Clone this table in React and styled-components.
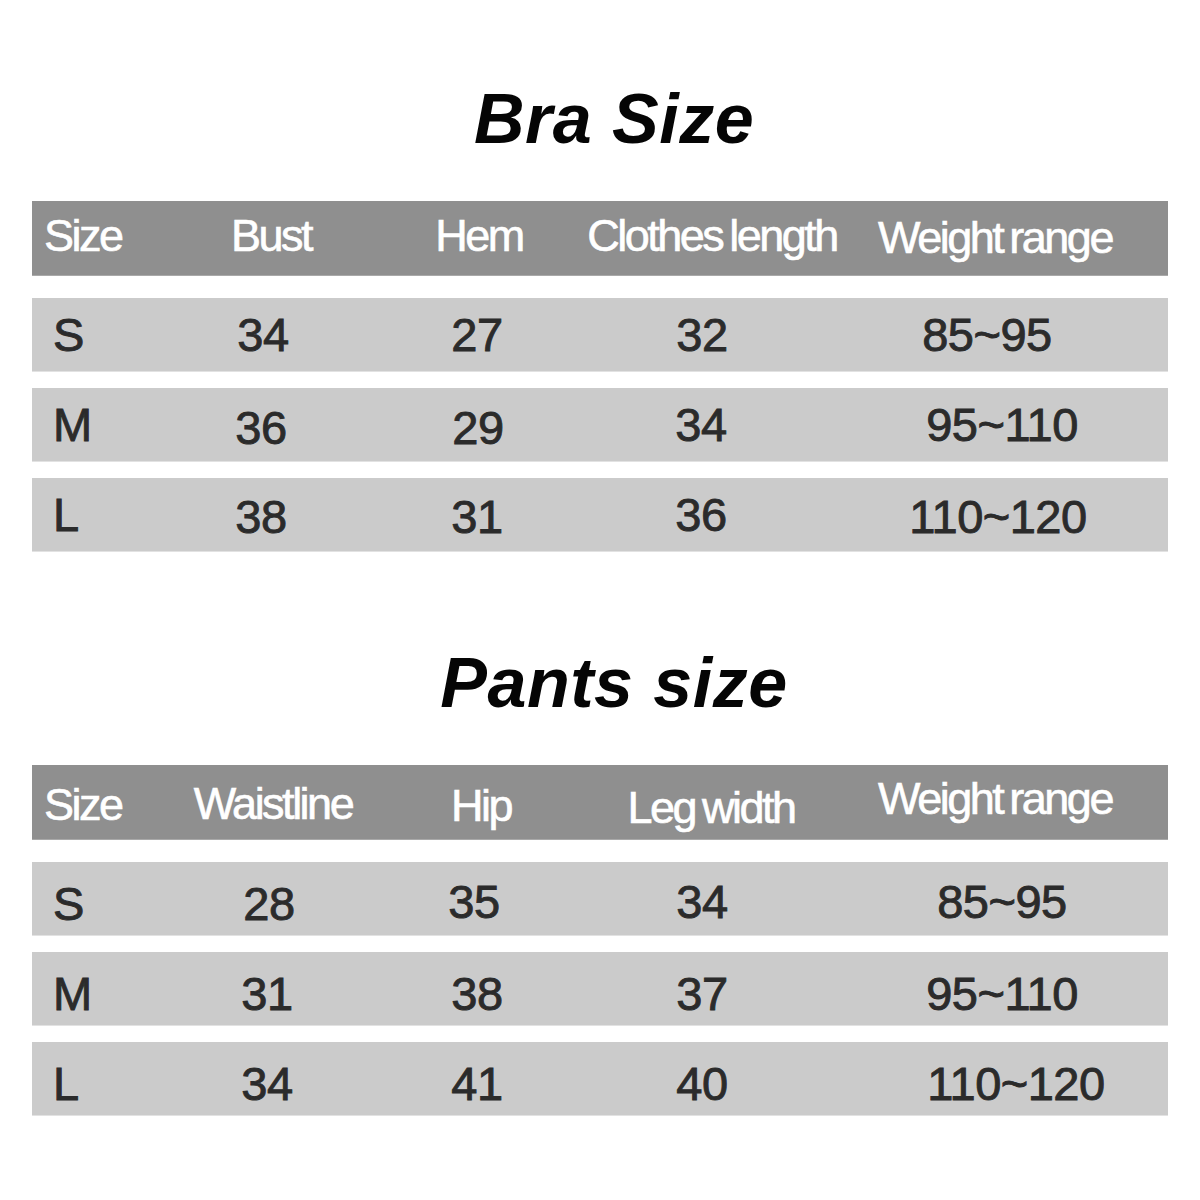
import React from 'react';
import styled, { createGlobalStyle } from 'styled-components';

const GlobalStyle = createGlobalStyle`
    html, body {
        margin: 0;
        padding: 0;
        background: #ffffff;
    }
    body {
        font-family: "Liberation Sans", Arial, sans-serif;
    }
`;

const braTable = {
    title: 'Bra Size',
    headers: [
        { label: 'Size', dy: -3 },
        { label: 'Bust', dx: 6, dy: -3 },
        { label: 'Hem', dx: 1, dy: -3 },
        { label: 'Clothes length', dx: 7, dy: -3 },
        { label: 'Weight range', dx: 4, dy: -1 },
    ],
    rowShift: 0,
    rows: [
        [{ v: 'S' }, { v: '34', dx: -2 }, { v: '27', dx: -1 }, { v: '32', dx: -3 }, { v: '85~95', dx: -4 }],
        [{ v: 'M' }, { v: '36', dx: -4, dy: 3 }, { v: '29', dy: 3 }, { v: '34', dx: -4 }, { v: '95~110', dx: 11 }],
        [{ v: 'L' }, { v: '38', dx: -4, dy: 2 }, { v: '31', dx: -1, dy: 2 }, { v: '36', dx: -4 }, { v: '110~120', dx: 7, dy: 2 }],
    ],
};

const pantsTable = {
    title: 'Pants size',
    headers: [
        { label: 'Size', dy: 2 },
        { label: 'Waistline', dx: 8, dy: 1 },
        { label: 'Hip', dx: 3, dy: 3 },
        { label: 'Leg width', dx: 6, dy: 5 },
        { label: 'Weight range', dx: 4, dy: -4 },
    ],
    rowShift: 5,
    rows: [
        [{ v: 'S' }, { v: '28', dx: 4 }, { v: '35', dx: -4, dy: -2 }, { v: '34', dx: -3, dy: -2 }, { v: '85~95', dx: 11, dy: -2 }],
        [{ v: 'M' }, { v: '31', dx: 2 }, { v: '38', dx: -1 }, { v: '37', dx: -3 }, { v: '95~110', dx: 11 }],
        [{ v: 'L' }, { v: '34', dx: 2 }, { v: '41', dx: -1 }, { v: '40', dx: -3 }, { v: '110~120', dx: 25 }],
    ],
};

function SizeTable({ table }) {
    return (
        <Section>
            <Title>{table.title}</Title>
            <HeaderBar>
                {table.headers.map((h, i) => (
                    <HeadCell key={h.label} $first={i === 0} $dx={h.dx || 0} $dy={h.dy || 0}>
                        {h.label}
                    </HeadCell>
                ))}
            </HeaderBar>
            <Rows>
                {table.rows.map((row) => (
                    <Row key={row[0].v} $shift={table.rowShift}>
                        {row.map((c, i) => (
                            <Cell key={i} $first={i === 0} $dx={c.dx || 0} $dy={c.dy || 0}>
                                {c.v}
                            </Cell>
                        ))}
                    </Row>
                ))}
            </Rows>
        </Section>
    );
}

export default function App() {
    return (
        <>
            <GlobalStyle />
            <Page>
                <SizeTable table={braTable} />
                <SizeTable table={pantsTable} />
            </Page>
        </>
    );
}

const Page = styled.div`
    width: 1200px;
    height: 1200px;
    box-sizing: border-box;
    padding: 84px 32px 0 32px;
    display: flex;
    flex-direction: column;
    gap: 96px;
    background: #ffffff;
`;

const Section = styled.section`
    display: flex;
    flex-direction: column;
`;

const Title = styled.h2`
    margin: 0 0 47px 0;
    height: 70px;
    font-family: "Liberation Sans", Arial, sans-serif;
    font-size: 70px;
    line-height: 70px;
    font-weight: 700;
    font-style: italic;
    letter-spacing: 0.5px;
    color: #050505;
    text-align: center;
    padding-left: 28px;
`;

const columns = '138px 190px 236px 218px 354px';

const HeaderBar = styled.div`
    display: grid;
    grid-template-columns: ${columns};
    align-items: center;
    height: 75px;
    margin-bottom: 22px;
    background: #8f8f8f;
    border-bottom: 1px solid #a9a9a9;
    box-sizing: border-box;
`;

const HeadCell = styled.div`
    justify-self: ${({ $first }) => ($first ? 'start' : 'center')};
    padding-left: ${({ $first }) => ($first ? '12px' : '0')};
    transform: translate(${({ $dx }) => $dx}px, ${({ $dy }) => $dy}px);
    font-size: 45px;
    line-height: 1;
    letter-spacing: -2.5px;
    word-spacing: -3px;
    color: #ffffff;
    -webkit-text-stroke: 0.6px #ffffff;
    white-space: nowrap;
`;

const Rows = styled.div`
    display: flex;
    flex-direction: column;
    gap: 16px;
`;

const Row = styled.div`
    display: grid;
    grid-template-columns: ${columns};
    align-items: center;
    height: 74px;
    box-sizing: border-box;
    padding-top: ${({ $shift }) => $shift * 2}px;
    background: #cbcbcb;
    border-bottom: 1px solid #e2e2e2;
`;

const Cell = styled.div`
    justify-self: ${({ $first }) => ($first ? 'start' : 'center')};
    padding-left: ${({ $first }) => ($first ? '21px' : '0')};
    transform: translate(${({ $dx }) => $dx}px, ${({ $dy }) => $dy}px);
    font-size: 47px;
    line-height: 1;
    letter-spacing: -0.5px;
    color: #2b2b2b;
    -webkit-text-stroke: 0.9px #2b2b2b;
    white-space: nowrap;
`;
